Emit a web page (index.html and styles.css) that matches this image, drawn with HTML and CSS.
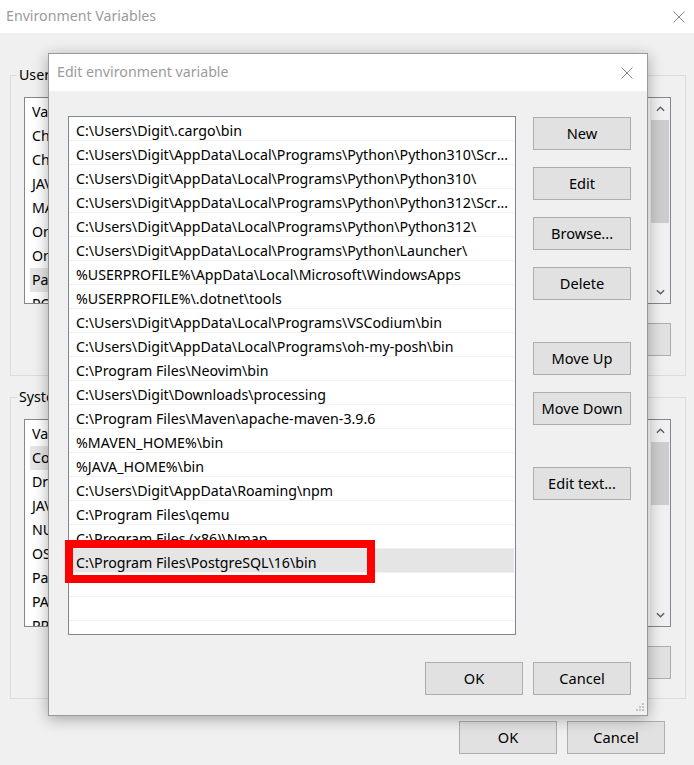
FILE: index.html
```html
<!DOCTYPE html>
<html>
<head>
<meta charset="utf-8">
<title>Environment Variables</title>
<link rel="stylesheet" href="styles.css">
</head>
<body>
<div class="window">
  <div class="titlebar">
    <span class="title">Environment Variables</span>
    <svg class="close" viewBox="0 0 12 12"><path d="M0.5 0.5L11.5 11.5M11.5 0.5L0.5 11.5" stroke="#8a8a8a" stroke-width="1" fill="none"/></svg>
  </div>
  <div class="win-body">
    <fieldset class="group">
      <legend>User variables for Digit</legend>
      <div class="listview lv-user">
        <div class="lv-items">
          <div class="lv-row lv-head">Variable</div>
          <div class="lv-row">ChocolateyInstall</div>
          <div class="lv-row">ChocolateyLastPathUpdate</div>
          <div class="lv-row">JAVA_HOME</div>
          <div class="lv-row">MAVEN_HOME</div>
          <div class="lv-row">OneDrive</div>
          <div class="lv-row">OneDriveConsumer</div>
          <div class="lv-row sel">Path</div>
          <div class="lv-row">POSH_THEMES_PATH</div>
        </div>
        <div class="vscroll">
          <div class="sb-arrow"><svg viewBox="0 0 10 6"><polyline points="1,5 5,1 9,5"/></svg></div>
          <div class="sb-track"><div class="sb-thumb thumb-user"></div></div>
          <div class="sb-arrow"><svg viewBox="0 0 10 6"><polyline points="1,1 5,5 9,1"/></svg></div>
        </div>
      </div>
      <div class="group-buttons">
        <button class="btn">New...</button>
        <button class="btn">Edit...</button>
        <button class="btn">Delete</button>
      </div>
    </fieldset>

    <fieldset class="group group-system">
      <legend>System variables</legend>
      <div class="listview lv-system">
        <div class="lv-items">
          <div class="lv-row lv-head">Variable</div>
          <div class="lv-row sel">ComSpec</div>
          <div class="lv-row">DriverData</div>
          <div class="lv-row">JAVA_HOME</div>
          <div class="lv-row">NUMBER_OF_PROCESSORS</div>
          <div class="lv-row">OS</div>
          <div class="lv-row">Path</div>
          <div class="lv-row">PATHEXT</div>
          <div class="lv-row">PROCESSOR_ARCHITECTURE</div>
        </div>
        <div class="vscroll">
          <div class="sb-arrow"><svg viewBox="0 0 10 6"><polyline points="1,5 5,1 9,5"/></svg></div>
          <div class="sb-track"><div class="sb-thumb thumb-system"></div></div>
          <div class="sb-arrow"><svg viewBox="0 0 10 6"><polyline points="1,1 5,5 9,1"/></svg></div>
        </div>
      </div>
      <div class="group-buttons">
        <button class="btn">New...</button>
        <button class="btn">Edit...</button>
        <button class="btn">Delete</button>
      </div>
    </fieldset>

    <div class="win-buttons">
      <button class="btn">OK</button>
      <button class="btn">Cancel</button>
    </div>
  </div>

  <div class="dialog">
    <div class="dlg-titlebar">
      <span class="title">Edit environment variable</span>
      <svg class="close" viewBox="0 0 12 12"><path d="M0.5 0.5L11.5 11.5M11.5 0.5L0.5 11.5" stroke="#8a8a8a" stroke-width="1" fill="none"/></svg>
    </div>
    <div class="dlg-body">
      <div class="dlg-main">
        <div class="list-wrap">
          <div class="path-list">
            <div class="path-row">C:\Users\Digit\.cargo\bin</div>
            <div class="path-row">C:\Users\Digit\AppData\Local\Programs\Python\Python310\Scripts\</div>
            <div class="path-row">C:\Users\Digit\AppData\Local\Programs\Python\Python310\</div>
            <div class="path-row">C:\Users\Digit\AppData\Local\Programs\Python\Python312\Scripts\</div>
            <div class="path-row">C:\Users\Digit\AppData\Local\Programs\Python\Python312\</div>
            <div class="path-row">C:\Users\Digit\AppData\Local\Programs\Python\Launcher\</div>
            <div class="path-row">%USERPROFILE%\AppData\Local\Microsoft\WindowsApps</div>
            <div class="path-row">%USERPROFILE%\.dotnet\tools</div>
            <div class="path-row">C:\Users\Digit\AppData\Local\Programs\VSCodium\bin</div>
            <div class="path-row">C:\Users\Digit\AppData\Local\Programs\oh-my-posh\bin</div>
            <div class="path-row">C:\Program Files\Neovim\bin</div>
            <div class="path-row">C:\Users\Digit\Downloads\processing</div>
            <div class="path-row">C:\Program Files\Maven\apache-maven-3.9.6</div>
            <div class="path-row">%MAVEN_HOME%\bin</div>
            <div class="path-row">%JAVA_HOME%\bin</div>
            <div class="path-row">C:\Users\Digit\AppData\Roaming\npm</div>
            <div class="path-row">C:\Program Files\qemu</div>
            <div class="path-row">C:\Program Files (x86)\Nmap</div>
            <div class="path-row selected">C:\Program Files\PostgreSQL\16\bin</div>
            <div class="path-row"></div>
            <div class="path-row"></div>
            <div class="path-row"></div>
          </div>
          <div class="highlight"></div>
        </div>
        <div class="dlg-buttons">
          <button class="btn">New</button>
          <button class="btn">Edit</button>
          <button class="btn">Browse...</button>
          <button class="btn">Delete</button>
          <button class="btn gap-big">Move Up</button>
          <button class="btn">Move Down</button>
          <button class="btn gap-big">Edit text...</button>
        </div>
      </div>
      <div class="dlg-footer">
        <button class="btn">OK</button>
        <button class="btn">Cancel</button>
      </div>
    </div>
    <svg class="grip" viewBox="0 0 12 12">
      <rect x="9" y="1" width="2" height="2"/>
      <rect x="6" y="4" width="2" height="2"/>
      <rect x="9" y="4" width="2" height="2"/>
      <rect x="3" y="7" width="2" height="2"/>
      <rect x="6" y="7" width="2" height="2"/>
      <rect x="9" y="7" width="2" height="2"/>
    </svg>
  </div>
</div>
</body>
</html>
```

FILE: styles.css
```css
* { box-sizing: border-box; }
html, body { margin: 0; padding: 0; }
body {
  width: 694px;
  height: 765px;
  overflow: hidden;
  background: #f0f0f0;
  font-family: "Noto Sans", "Open Sans", sans-serif;
  font-size: 14.2px;
  color: #000;
}
.window {
  position: relative;
  width: 694px;
  height: 765px;
  background: #f0f0f0;
}
.titlebar {
  height: 33px;
  background: #fff;
  display: flex;
  align-items: center;
  justify-content: space-between;
  padding: 0 9px 0 6px;
}
.title {
  color: #9b9b9b;
  line-height: 20px;
  font-size: 14.2px;
}
.titlebar .title { margin-top: -2px; }
.close { width: 12px; height: 12px; display: block; }

.win-body {
  padding: 32px 0 0 10px;
}
.group {
  margin: 0;
  padding: 0;
  width: 676px;
  min-width: 0;
  border: 1px solid #dcdcdc;
}
.group legend {
  margin-left: 6px;
  padding: 0 2px;
  height: 20px;
  line-height: 20px;
  white-space: nowrap;
}
.group-system { margin-top: 11px; }

.listview {
  margin: 12px 14px 0 13px;
  height: 207px;
  border: 1px solid #828790;
  background: #fff;
  display: flex;
  overflow: hidden;
}
.lv-system { height: 208px; }
.lv-items { flex: 1; min-width: 0; overflow: hidden; }
.lv-row {
  height: 24px;
  line-height: 24px;
  padding-left: 7px;
  white-space: nowrap;
  overflow: hidden;
}
.lv-row.lv-head { height: 26px; line-height: 27px; }
.lv-row.sel { background: #e5e5e5; margin-left: 5px; padding-left: 2px; width: 180px; }

.vscroll {
  width: 20px;
  flex: none;
  background: #f0f0f0;
  display: flex;
  flex-direction: column;
}
.sb-arrow {
  height: 22px;
  flex: none;
  display: flex;
  align-items: center;
  justify-content: center;
}
.sb-arrow svg {
  width: 9px;
  height: 6px;
  fill: none;
  stroke: #606060;
  stroke-width: 1.6;
}
.sb-track { flex: 1; }
.sb-thumb { background: #cdcdcd; margin: 0 1px; }
.thumb-user { height: 103px; }
.thumb-system { height: 63px; }

.group-buttons {
  margin: 19px 14px 19px 13px;
  display: flex;
  justify-content: flex-end;
  gap: 10px;
}
.win-buttons {
  width: 676px;
  margin-top: 22px;
  padding-right: 21px;
  display: flex;
  justify-content: flex-end;
  gap: 10px;
}

.btn {
  width: 98px;
  height: 33px;
  margin: 0;
  padding: 0;
  border: 1px solid #adadad;
  background: #e1e1e1;
  font-family: inherit;
  font-size: 14.6px;
  color: #000;
  text-align: center;
  line-height: 31px;
  flex: none;
}

/* dialog */
.dialog {
  position: absolute;
  left: 48px;
  top: 53px;
  width: 600px;
  height: 663px;
  border: 1px solid #9a9a9a;
  background: #f0f0f0;
  box-shadow: 0 3px 14px rgba(0, 0, 0, 0.32);
  display: flex;
  flex-direction: column;
}
.dlg-titlebar {
  height: 37px;
  flex: none;
  background: #fff;
  display: flex;
  align-items: center;
  justify-content: space-between;
  padding: 0 14px 0 8px;
}
.dlg-titlebar .title { margin-top: -1px; }
.dlg-body {
  flex: 1;
  padding: 25px 16px 20px 19px;
  display: flex;
  flex-direction: column;
}
.dlg-main {
  display: flex;
  gap: 17px;
}
.list-wrap {
  position: relative;
  width: 448px;
  height: 519px;
  flex: none;
}
.path-list {
  width: 100%;
  height: 100%;
  border: 1px solid #828790;
  background: #fff;
  overflow: hidden;
}
.path-row {
  height: 24px;
  line-height: 27px;
  border-bottom: 1px solid #f0f0f0;
  padding: 0 5px 0 7px;
  white-space: nowrap;
  overflow: hidden;
  text-overflow: ellipsis;
}
.path-row.selected { background: #e5e5e5; margin: 0 1px; padding-left: 6px; }
.highlight {
  position: absolute;
  left: -3px;
  top: 424px;
  width: 310px;
  height: 43px;
  border: 8px solid #ff0000;
}
.dlg-buttons {
  width: 98px;
  padding-top: 1px;
  display: flex;
  flex-direction: column;
  gap: 17px;
}
.dlg-buttons .gap-big { margin-top: 25px; }
.dlg-footer {
  margin-top: 27px;
  display: flex;
  justify-content: flex-end;
  gap: 10px;
}
.grip {
  position: absolute;
  right: 2px;
  bottom: 1px;
  width: 12px;
  height: 12px;
  fill: #c4c4c4;
}
```
